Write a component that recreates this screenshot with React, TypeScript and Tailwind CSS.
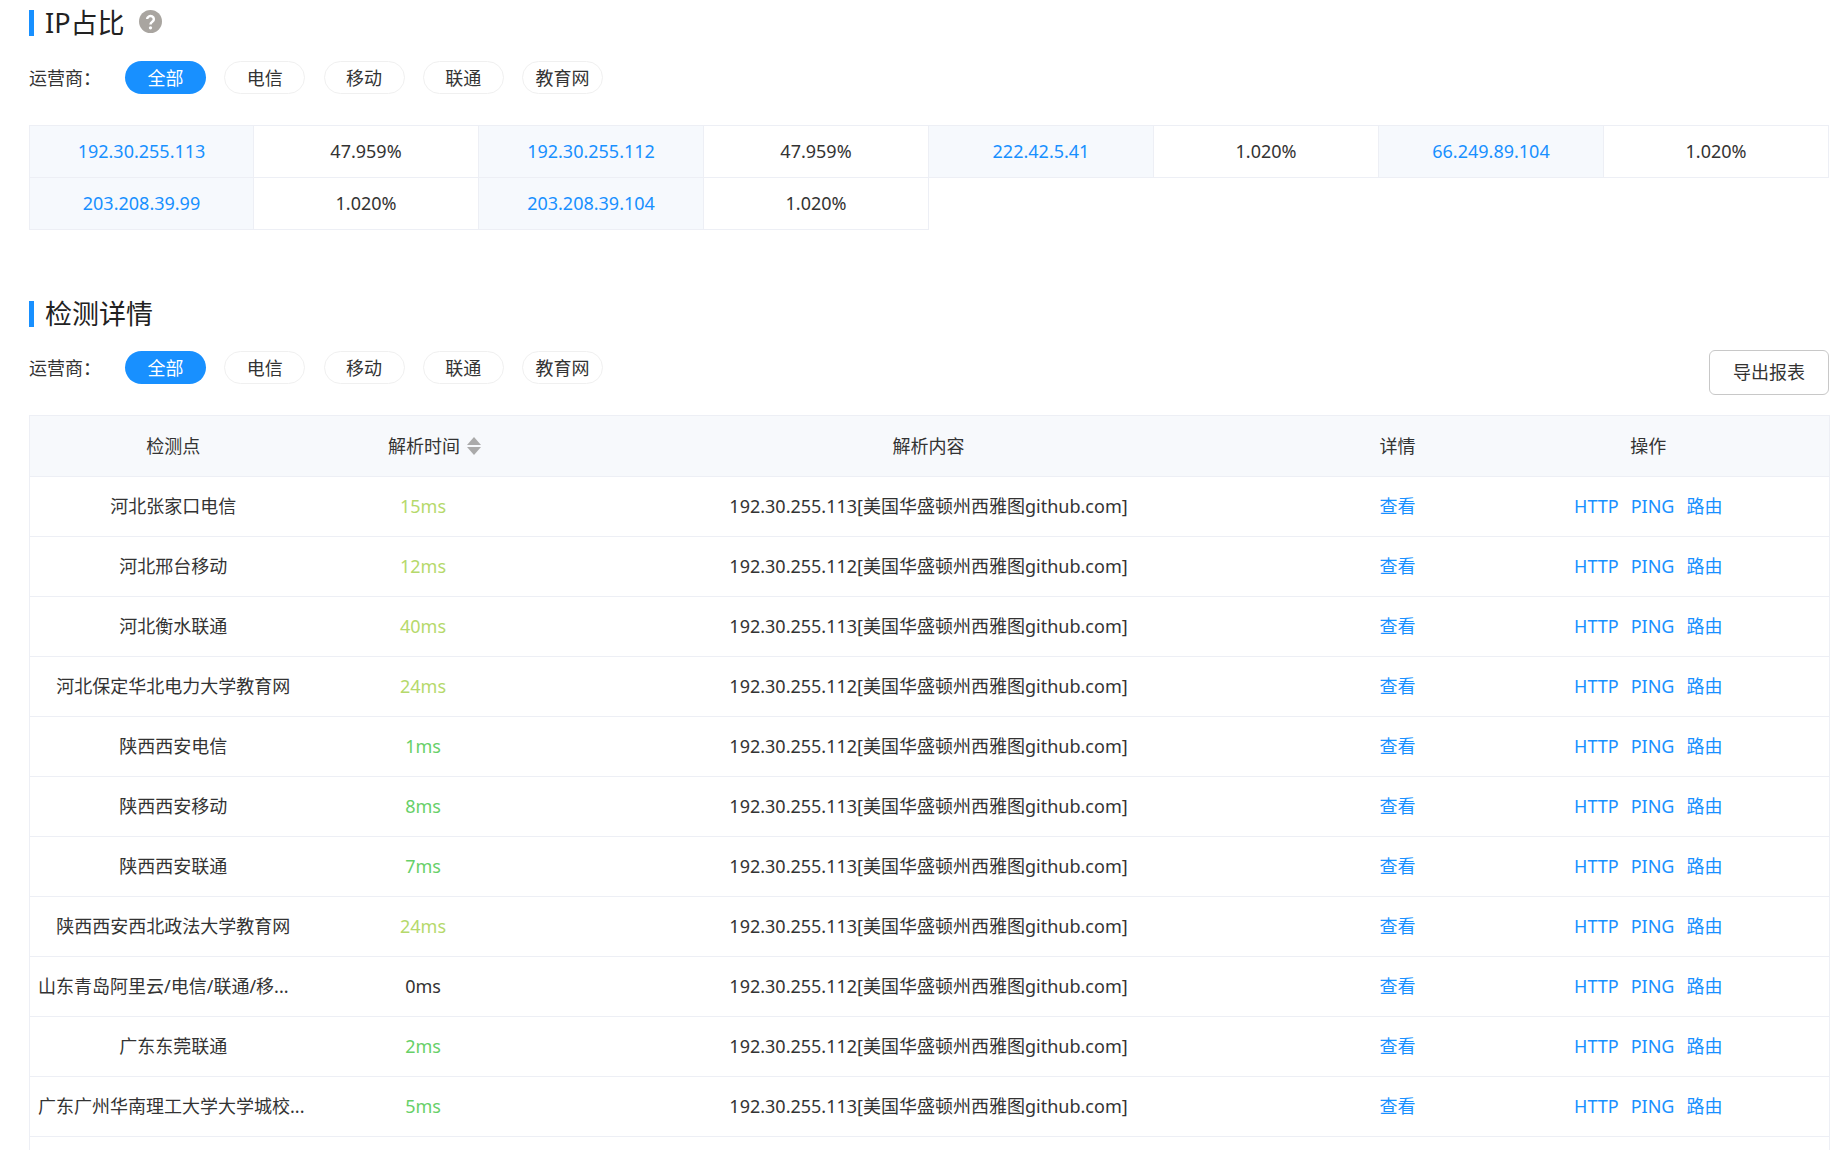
const font = { fontFamily: '"Noto Sans", "Noto Sans CJK SC", sans-serif' };

const ipRows = [
  ["192.30.255.113", "47.959%"],
  ["192.30.255.112", "47.959%"],
  ["222.42.5.41", "1.020%"],
  ["66.249.89.104", "1.020%"],
  ["203.208.39.99", "1.020%"],
  ["203.208.39.104", "1.020%"],
];

const LIGHT = "text-[#b5d96b]";
const GREEN = "text-[#67d068]";
const DARK = "text-[#333]";

const rows: [string, string, string, string][] = [
  ["河北张家口电信", "15ms", LIGHT, "113"],
  ["河北邢台移动", "12ms", LIGHT, "112"],
  ["河北衡水联通", "40ms", LIGHT, "113"],
  ["河北保定华北电力大学教育网", "24ms", LIGHT, "112"],
  ["陕西西安电信", "1ms", GREEN, "112"],
  ["陕西西安移动", "8ms", GREEN, "113"],
  ["陕西西安联通", "7ms", GREEN, "113"],
  ["陕西西安西北政法大学教育网", "24ms", LIGHT, "113"],
  ["山东青岛阿里云/电信/联通/移...", "0ms", DARK, "112"],
  ["广东东莞联通", "2ms", GREEN, "112"],
  ["广东广州华南理工大学大学城校...", "5ms", GREEN, "113"],
];

function Title({ children }: { children: React.ReactNode }) {
  return (
    <div className="flex h-[26px] items-center border-l-[5px] border-[#1890ff] pl-[11px] text-[27px] leading-[26px] text-[#222]">
      {children}
    </div>
  );
}

function Carriers() {
  return (
    <div className="flex items-center text-[18px] text-[#333]">
      <span className="w-[96px] pt-px">运营商：</span>
      <div className="flex gap-[18.25px]">
        {["全部", "电信", "移动", "联通", "教育网"].map((name, i) => (
          <span
            key={name}
            className={
              i === 0
                ? "flex h-[33px] w-[81px] items-center justify-center rounded-full bg-[#1890ff] pt-px text-white"
                : "flex h-[33px] w-[81px] items-center justify-center rounded-full border border-[#f0f0f0] pt-px"
            }
          >
            {name}
          </span>
        ))}
      </div>
    </div>
  );
}

export default function App() {
  return (
    <div style={font} className="h-[1150px] overflow-hidden bg-white pl-[29px] pr-[11px] pt-[10px] text-[18px] text-[#333]">
      <Title>
        <span>IP占比</span>
        <svg className="ml-[14px] mb-[4px] h-[23px] w-[23px]" viewBox="0 0 24 24">
          <circle cx="12" cy="12" r="12" fill="#a9a5a0" />
          <path d="M8.5 9.5a3.5 3.2 0 1 1 5.4 2.7c-1.2.8-1.9 1.4-1.9 2.8" fill="none" stroke="#fff" strokeWidth="2.6" />
          <circle cx="12" cy="18.6" r="1.7" fill="#fff" />
        </svg>
      </Title>

      <div className="mt-[25px]">
        <Carriers />
      </div>

      <div className="ml-px mt-[32px] grid grid-cols-[224px_repeat(7,225px)]">
        {ipRows.map(([ip, pct]) => (
          <div key={ip} className="contents">
            <div className="-mt-px -ml-px flex h-[53px] items-center justify-center border border-[#edeff5] bg-[#f6f9fd] text-[#1890ff]">
              {ip}
            </div>
            <div className="-mt-px -ml-px flex h-[53px] items-center justify-center border border-[#edeff5]">{pct}</div>
          </div>
        ))}
      </div>

      <div className="mt-[71px]">
        <Title>
          <span>检测详情</span>
        </Title>
      </div>

      <div className="mt-[23px] flex items-start justify-between">
        <div className="pt-[1px]">
          <Carriers />
        </div>
        <button className="h-[45px] w-[120px] rounded-[6px] border border-[#c8c8c8] text-[18px] text-[#333]">导出报表</button>
      </div>

      <table className="mt-[20px] w-[1800px] table-fixed border-collapse border-x border-[#edeff5]">
        <colgroup>
          <col className="w-[287px]" />
          <col className="w-[213px]" />
          <col className="w-[798px]" />
          <col className="w-[140px]" />
          <col className="w-[362px]" />
        </colgroup>
        <thead>
          <tr className="h-[61px] border-y border-[#edeff5] bg-[#f7f9fc]">
            <th className="font-normal">检测点</th>
            <th className="pl-[23px] font-normal">
              <span className="inline-flex items-center gap-[7px]">
                解析时间
                <svg className="h-[18px] w-[14px]" viewBox="0 0 14 18" fill="#aaa">
                  <path d="M7 0l7 8H0zM0 10h14l-7 8z" />
                </svg>
              </span>
            </th>
            <th className="font-normal">解析内容</th>
            <th className="font-normal">详情</th>
            <th className="font-normal">操作</th>
          </tr>
        </thead>
        <tbody>
          {rows.map(([place, time, color, ip], i) => (
            <tr key={i} className="h-[60px] border-b border-[#edeff5] text-center">
              <td className={place.endsWith("...") ? "px-[8px] text-left" : "px-[8px]"}>{place}</td>
              <td className={color}>{time}</td>
              <td>{`192.30.255.${ip}[美国华盛顿州西雅图github.com]`}</td>
              <td className="text-[#1890ff]">查看</td>
              <td className="text-[#1890ff]">
                <span className="inline-flex gap-[12px]">
                  <span>HTTP</span>
                  <span>PING</span>
                  <span>路由</span>
                </span>
              </td>
            </tr>
          ))}
          <tr className="h-[60px]">
            <td colSpan={5} />
          </tr>
        </tbody>
      </table>
    </div>
  );
}
